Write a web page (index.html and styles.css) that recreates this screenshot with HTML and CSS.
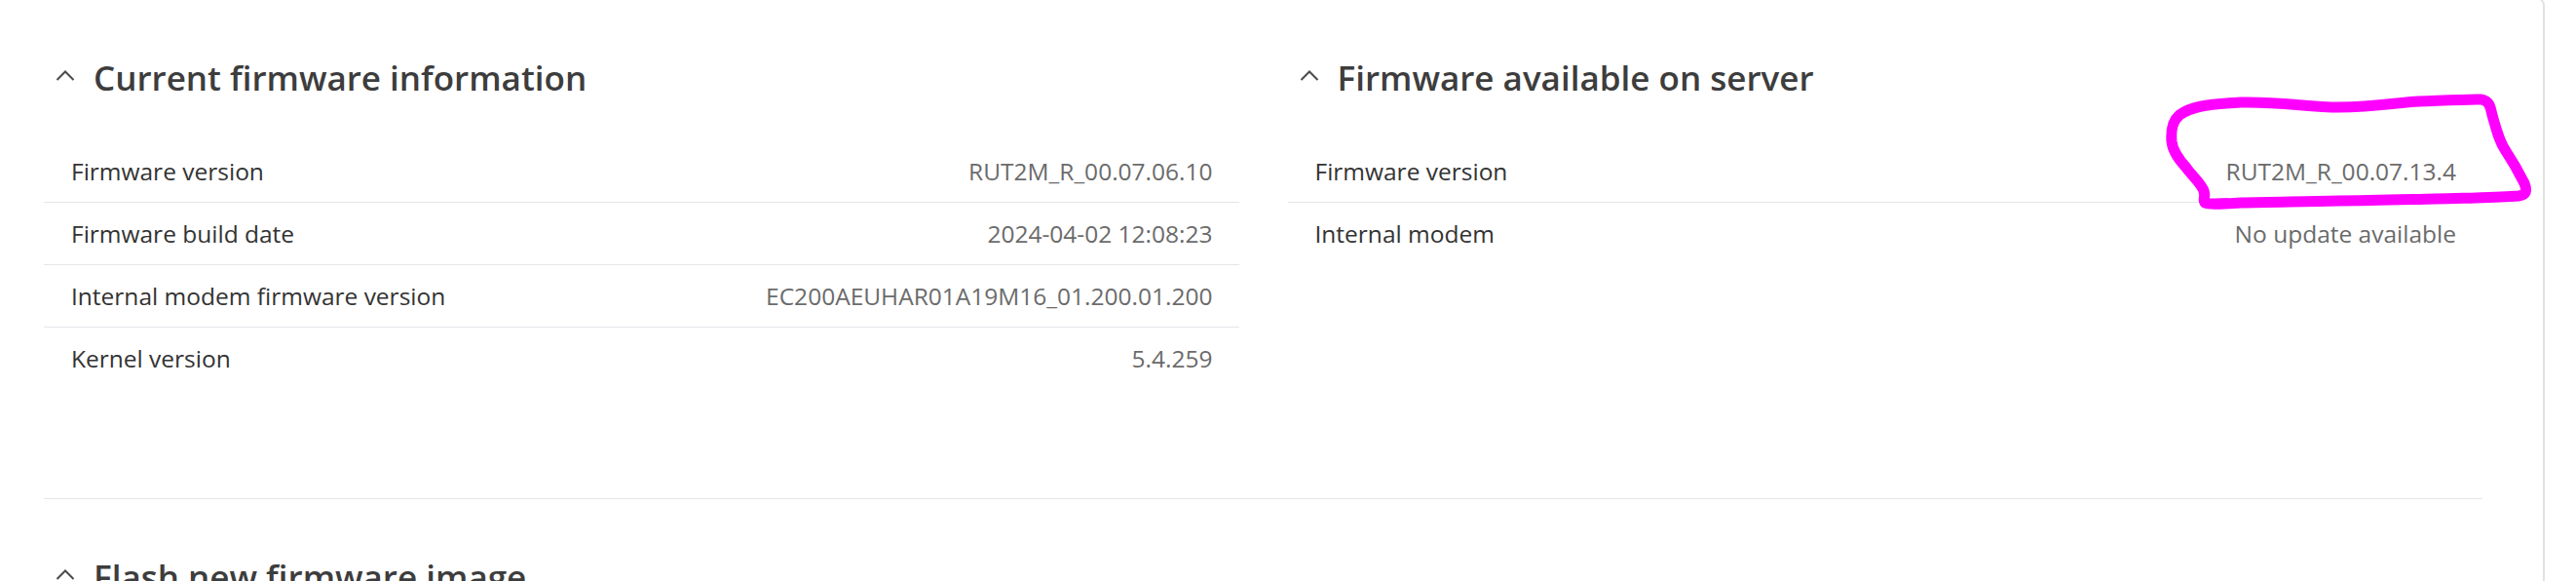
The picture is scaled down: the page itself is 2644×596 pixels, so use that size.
FILE: index.html
```html
<!DOCTYPE html>
<html lang="en">
<head>
<meta charset="utf-8">
<title>Firmware</title>
<link rel="stylesheet" href="styles.css">
</head>
<body>
<div class="card">
  <div class="info-grid">
    <section class="col">
      <h2 class="sec-head">
        <svg class="chev" width="20" height="12" viewBox="0 0 20 12"><polyline points="1.5,11 10,2.5 18.5,11" fill="none" stroke="#4a4a4a" stroke-width="2"/></svg>
        <span>Current firmware information</span>
      </h2>
      <div class="rows">
        <div class="row"><span class="label">Firmware version</span><span class="value">RUT2M_R_00.07.06.10</span></div>
        <div class="row"><span class="label">Firmware build date</span><span class="value">2024-04-02 12:08:23</span></div>
        <div class="row"><span class="label">Internal modem firmware version</span><span class="value">EC200AEUHAR01A19M16_01.200.01.200</span></div>
        <div class="row"><span class="label">Kernel version</span><span class="value">5.4.259</span></div>
      </div>
    </section>
    <section class="col">
      <h2 class="sec-head">
        <svg class="chev" width="20" height="12" viewBox="0 0 20 12"><polyline points="1.5,11 10,2.5 18.5,11" fill="none" stroke="#4a4a4a" stroke-width="2"/></svg>
        <span>Firmware available on server</span>
      </h2>
      <div class="rows">
        <div class="row"><span class="label">Firmware version</span><span class="value">RUT2M_R_00.07.13.4</span></div>
        <div class="row"><span class="label">Internal modem</span><span class="value">No update available</span></div>
      </div>
    </section>
  </div>
  <section class="flash">
    <h2 class="sec-head">
      <svg class="chev" width="20" height="12" viewBox="0 0 20 12"><polyline points="1.5,11 10,2.5 18.5,11" fill="none" stroke="#4a4a4a" stroke-width="2"/></svg>
      <span>Flash new firmware image</span>
    </h2>
  </section>
</div>
<svg class="annot" width="2644" height="596" viewBox="0 0 2644 596">
  <path d="M2237,118 C2248,110 2262,107 2300,105 C2340,104 2370,110 2400,110 C2440,110 2460,105 2483,104 C2510,103 2530,102 2547,102 C2556,104 2556,110 2558,118 C2562,132 2565,145 2572,155 C2580,167 2586,178 2591,188 C2594,196 2593,200 2585,201 C2560,203 2530,203 2500,204 C2460,205 2430,206 2400,206 C2360,207 2330,207 2300,208 C2280,209 2268,210 2263,208 C2260,204 2266,200 2260,192 C2255,184 2248,178 2244,172 C2236,163 2230,155 2229,145 C2228,132 2230,124 2237,118 Z" fill="none" stroke="#ff00ff" stroke-width="11" stroke-linejoin="round"/>
</svg>
</body>
</html>
```

FILE: styles.css
```css
* { box-sizing: border-box; }
html, body {
  margin: 0;
  padding: 0;
  background: #ffffff;
  width: 2644px;
  height: 596px;
  overflow: hidden;
  position: relative;
}
body {
  font-family: "Open Sans", "Noto Sans", sans-serif;
  color: #333333;
}
.card {
  width: 2612px;
  margin-top: -4px;
  border-top: 2px solid #e2e2e2;
  border-right: 2px solid #e2e2e2;
  border-top-right-radius: 10px;
  padding: 59px 62px 0 45px;
  height: 620px;
}
.info-grid {
  display: grid;
  grid-template-columns: 1fr 1fr;
  column-gap: 50px;
  border-bottom: 1px solid #e6e6e6;
  padding-bottom: 111px;
}
.sec-head {
  display: flex;
  align-items: center;
  gap: 19px;
  margin: 0;
  padding-left: 12px;
  font-size: 35px;
  font-weight: 600;
  color: #3d3d3d;
  line-height: 46px;
}
.chev {
  flex: none;
  margin-bottom: 7px;
}
.rows {
  margin-top: 41px;
}
.row {
  display: flex;
  justify-content: space-between;
  align-items: center;
  height: 64px;
  padding: 0 27px 1px 28px;
  border-bottom: 1px solid #e4e6ea;
  font-size: 24.5px;
}
.row:last-child {
  border-bottom: none;
}
.label {
  color: #333333;
}
.value {
  color: #6b6b6b;
}
.flash {
  padding-top: 57px;
}
.annot {
  position: absolute;
  left: 0;
  top: 0;
  pointer-events: none;
}
```
